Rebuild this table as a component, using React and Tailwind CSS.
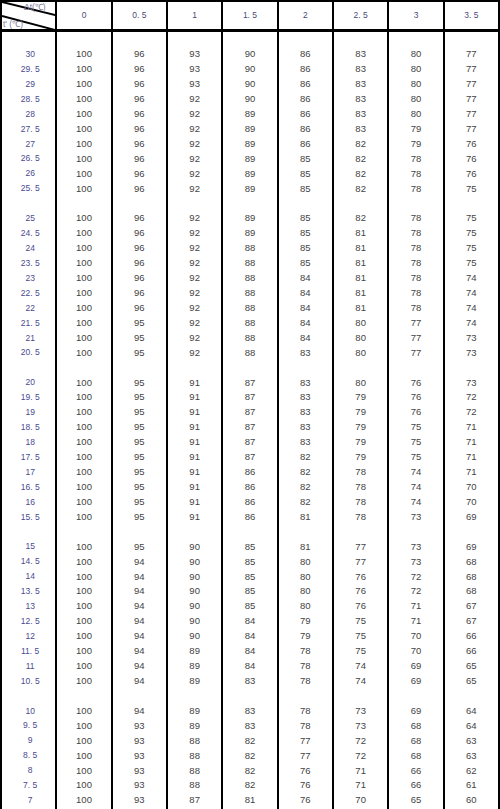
const cols = ['0', '0. 5', '1', '1. 5', '2', '2. 5', '3', '3. 5'];

const groups = [
  [
    ['30', 100, 96, 93, 90, 86, 83, 80, 77],
    ['29. 5', 100, 96, 93, 90, 86, 83, 80, 77],
    ['29', 100, 96, 93, 90, 86, 83, 80, 77],
    ['28. 5', 100, 96, 92, 90, 86, 83, 80, 77],
    ['28', 100, 96, 92, 89, 86, 83, 80, 77],
    ['27. 5', 100, 96, 92, 89, 86, 83, 79, 77],
    ['27', 100, 96, 92, 89, 86, 82, 79, 76],
    ['26. 5', 100, 96, 92, 89, 85, 82, 78, 76],
    ['26', 100, 96, 92, 89, 85, 82, 78, 76],
    ['25. 5', 100, 96, 92, 89, 85, 82, 78, 75],
  ],
  [
    ['25', 100, 96, 92, 89, 85, 82, 78, 75],
    ['24. 5', 100, 96, 92, 89, 85, 81, 78, 75],
    ['24', 100, 96, 92, 88, 85, 81, 78, 75],
    ['23. 5', 100, 96, 92, 88, 85, 81, 78, 75],
    ['23', 100, 96, 92, 88, 84, 81, 78, 74],
    ['22. 5', 100, 96, 92, 88, 84, 81, 78, 74],
    ['22', 100, 96, 92, 88, 84, 81, 78, 74],
    ['21. 5', 100, 95, 92, 88, 84, 80, 77, 74],
    ['21', 100, 95, 92, 88, 84, 80, 77, 73],
    ['20. 5', 100, 95, 92, 88, 83, 80, 77, 73],
  ],
  [
    ['20', 100, 95, 91, 87, 83, 80, 76, 73],
    ['19. 5', 100, 95, 91, 87, 83, 79, 76, 72],
    ['19', 100, 95, 91, 87, 83, 79, 76, 72],
    ['18. 5', 100, 95, 91, 87, 83, 79, 75, 71],
    ['18', 100, 95, 91, 87, 83, 79, 75, 71],
    ['17. 5', 100, 95, 91, 87, 82, 79, 75, 71],
    ['17', 100, 95, 91, 86, 82, 78, 74, 71],
    ['16. 5', 100, 95, 91, 86, 82, 78, 74, 70],
    ['16', 100, 95, 91, 86, 82, 78, 74, 70],
    ['15. 5', 100, 95, 91, 86, 81, 78, 73, 69],
  ],
  [
    ['15', 100, 95, 90, 85, 81, 77, 73, 69],
    ['14. 5', 100, 94, 90, 85, 80, 77, 73, 68],
    ['14', 100, 94, 90, 85, 80, 76, 72, 68],
    ['13. 5', 100, 94, 90, 85, 80, 76, 72, 68],
    ['13', 100, 94, 90, 85, 80, 76, 71, 67],
    ['12. 5', 100, 94, 90, 84, 79, 75, 71, 67],
    ['12', 100, 94, 90, 84, 79, 75, 70, 66],
    ['11. 5', 100, 94, 89, 84, 78, 75, 70, 66],
    ['11', 100, 94, 89, 84, 78, 74, 69, 65],
    ['10. 5', 100, 94, 89, 83, 78, 74, 69, 65],
  ],
  [
    ['10', 100, 94, 89, 83, 78, 73, 69, 64],
    ['9. 5', 100, 93, 89, 83, 78, 73, 68, 64],
    ['9', 100, 93, 88, 82, 77, 72, 68, 63],
    ['8. 5', 100, 93, 88, 82, 77, 72, 68, 63],
    ['8', 100, 93, 88, 82, 76, 71, 66, 62],
    ['7. 5', 100, 93, 88, 82, 76, 71, 66, 61],
    ['7', 100, 93, 87, 81, 76, 70, 65, 60],
  ],
];

// flatten into lines, with a blank line before every group
const lines = [];
groups.forEach(g => {
  lines.push(null);
  g.forEach(r => lines.push(r));
});

const Column = ({ index }) => (
  <div className="border-r-2 border-black flex flex-col">
    {lines.map((r, i) => (
      <div
        key={i}
        className={
          index === 0
            ? "h-[14.93px] flex items-center justify-center pl-[3px] text-[8.5px] text-[#4a4a90] font-['Liberation_Sans',Arial,sans-serif] whitespace-pre"
            : "h-[14.93px] flex items-center justify-center text-[9.5px] text-[#444] font-['Liberation_Sans',Arial,sans-serif]"
        }
      >
        {r ? r[index] : ''}
      </div>
    ))}
    <div className="h-[20px]" />
  </div>
);

const App = () => {
  return (
    <div className="w-[500px] bg-white border-t-2 border-l-2 border-black overflow-hidden">
      <div className="grid grid-cols-9 h-[30px] border-b-[3px] border-black">
        <div className="relative border-r-2 border-black overflow-hidden">
          <svg className="absolute inset-0" width="100%" height="100%" viewBox="0 0 54 27" preserveAspectRatio="none">
            <line x1="0" y1="0" x2="54" y2="13" stroke="#000" strokeWidth="2" />
            <line x1="0" y1="14" x2="54" y2="28" stroke="#000" strokeWidth="2" />
          </svg>
          <span className="absolute left-[22px] top-[1px] text-[8.5px] leading-none text-[#7a7a9a] font-['Liberation_Sans',Arial,sans-serif]">Δt(℃)</span>
          <span className="absolute left-[1px] top-[18px] text-[8.5px] leading-none text-[#7a7a9a] font-['Liberation_Sans',Arial,sans-serif] whitespace-pre">t' (℃)</span>
        </div>
        {cols.map(c => (
          <div key={c} className="border-r-2 border-black flex items-center justify-center text-[8.5px] text-[#4a4a7a] font-['Liberation_Sans',Arial,sans-serif] whitespace-pre">
            {c}
          </div>
        ))}
      </div>
      <div className="grid grid-cols-9">
        {Array.from({ length: 9 }).map((_, i) => (
          <Column key={i} index={i} />
        ))}
      </div>
    </div>
  );
};

export default App;
